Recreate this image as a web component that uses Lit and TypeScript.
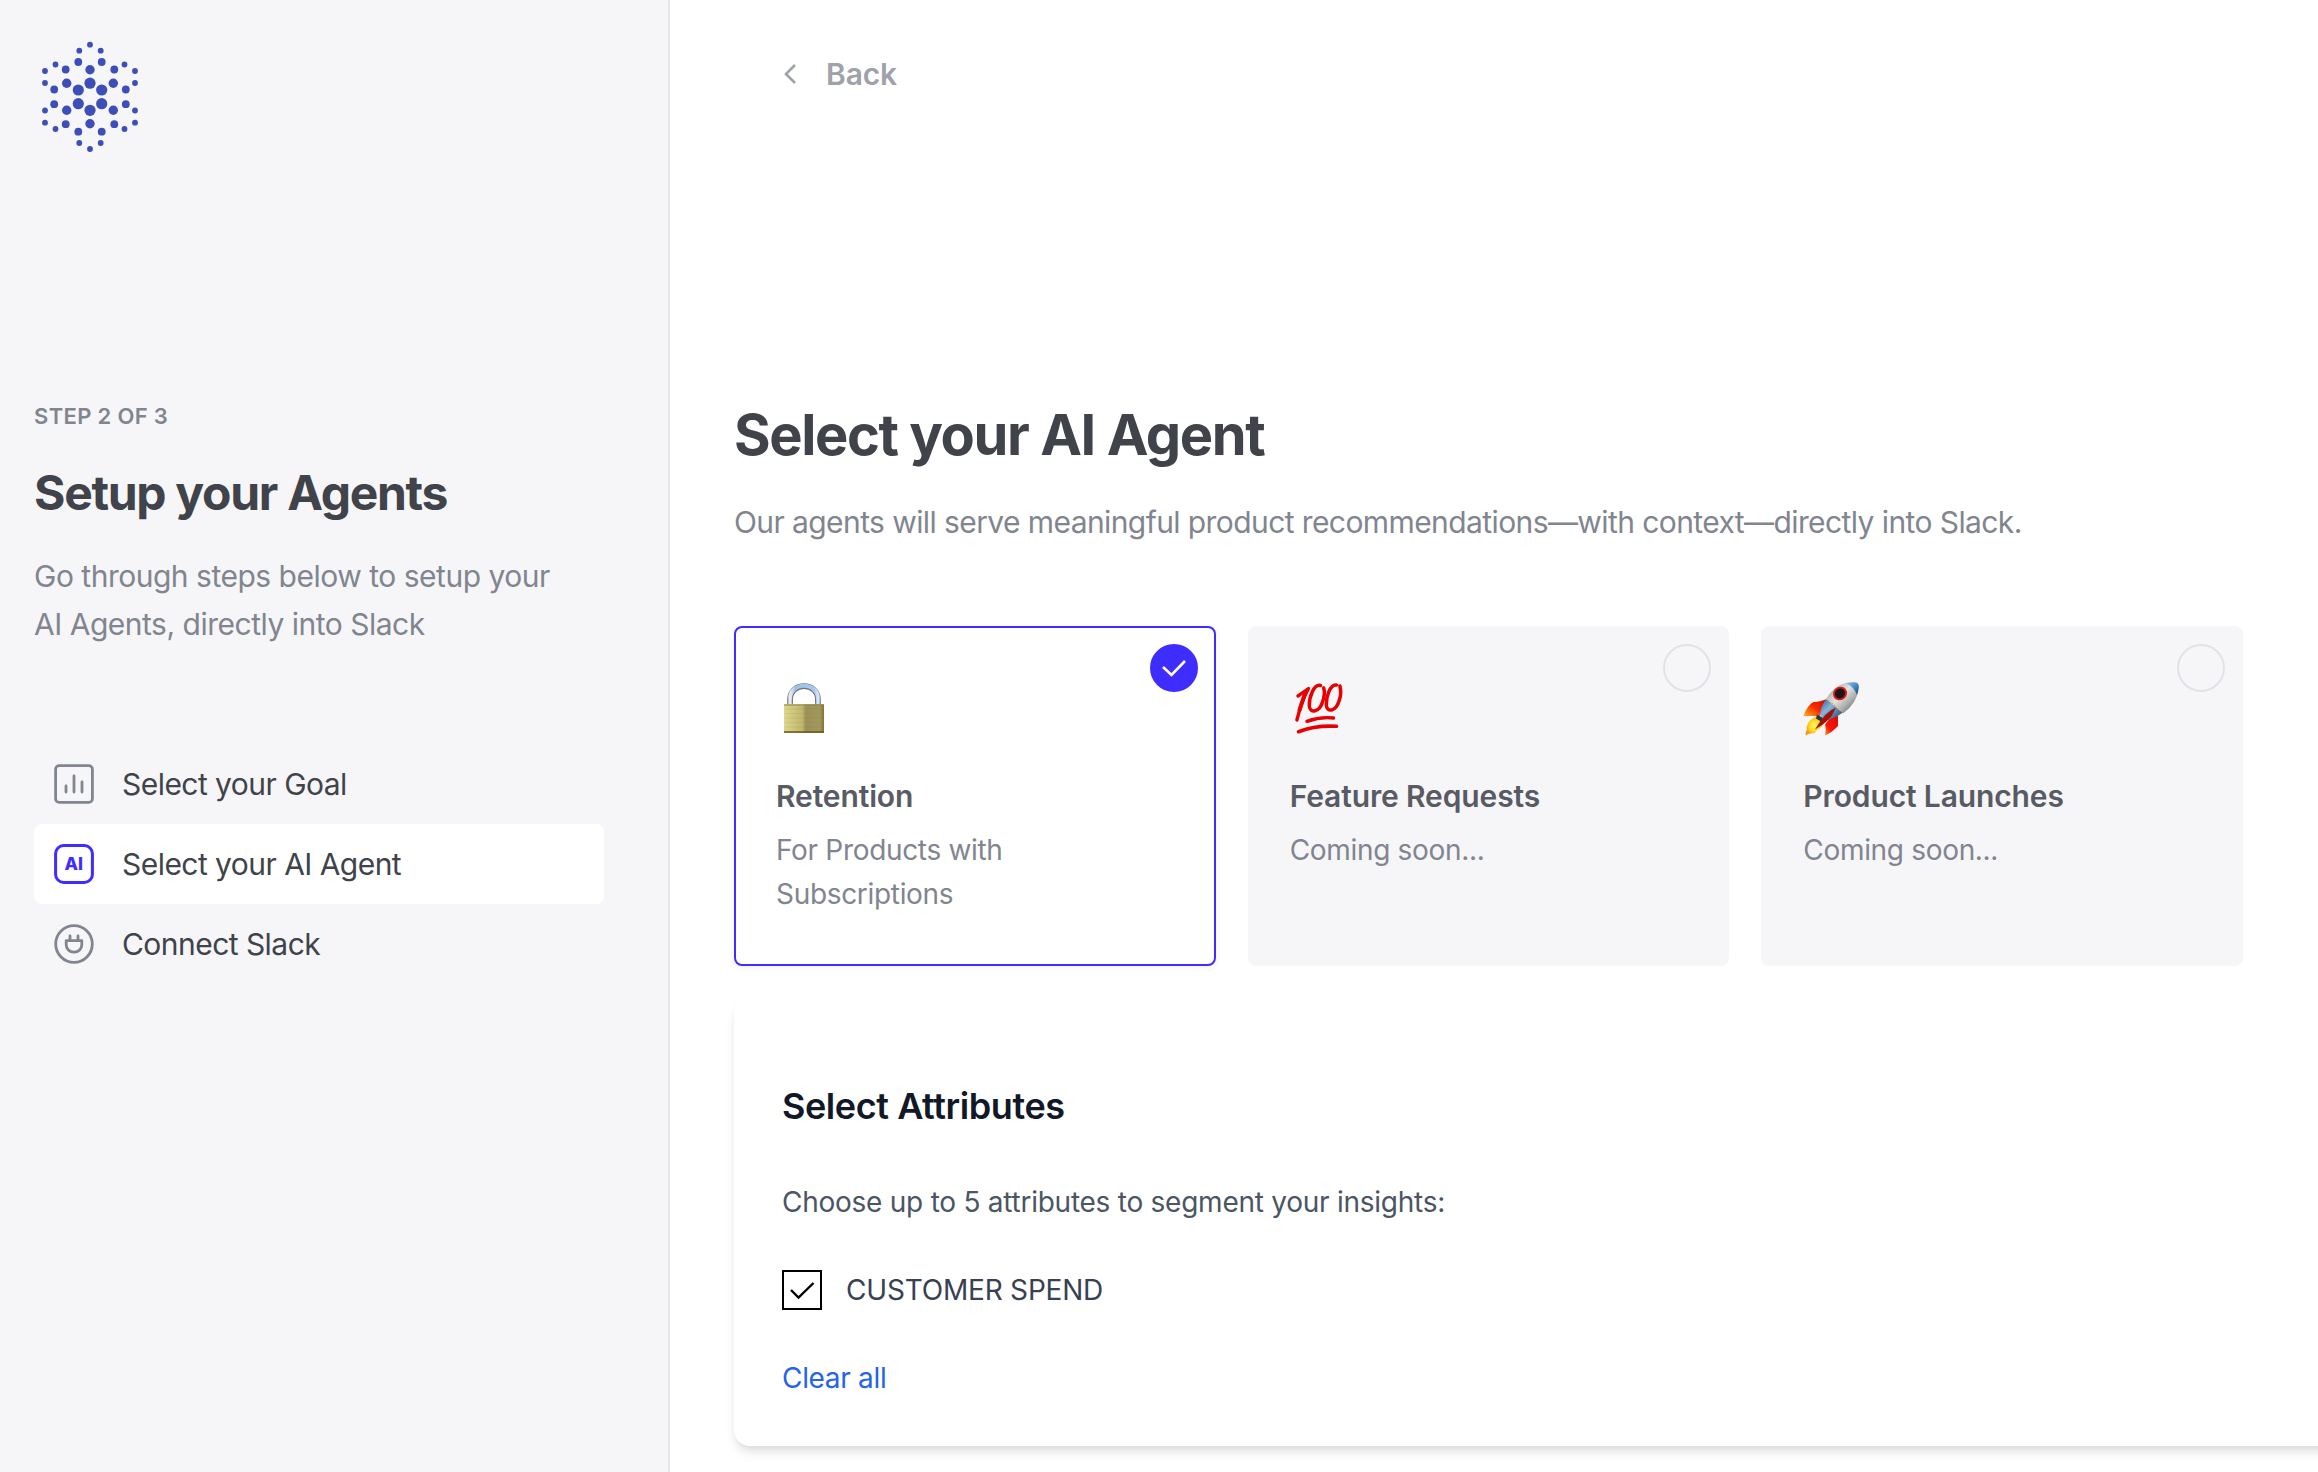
import { LitElement, html, css, svg } from "lit";
import { customElement } from "lit/decorators.js";

const LOGO_DOTS: [number, number, number][] = [
  [70,24.7,2.9],[59.3,30.7,2.9],[80.7,30.7,2.9],[58.3,42,3.9],[81.7,42,3.9],
  [35.5,44.5,2.9],[104.5,44.5,2.9],[25,51,2.9],[115,51,2.9],[45.7,49.5,3.9],[94.3,49.5,3.9],[70,49.7,4.7],
  [25,63,2.9],[115,63,2.9],[46.7,63.3,4.7],[93.3,63.3,4.7],[70,63.2,5.6],
  [34.2,69.5,3.9],[105.8,69.5,3.9],[58.3,70,5.6],[81.7,70,5.6],
  [34.2,84.2,3.9],[105.8,84.2,3.9],[58.3,83.7,5.6],[81.7,83.7,5.6],
  [25,90.5,2.9],[115,90.5,2.9],[46.7,90.3,4.7],[93.3,90.3,4.7],[70,90.3,5.6],
  [25,102.7,2.9],[115,102.7,2.9],[45.7,104.2,3.9],[94.3,104.2,3.9],[70,103.8,4.7],
  [35.5,109,2.9],[104.5,109,2.9],[58.3,111.7,3.9],[81.7,111.7,3.9],
  [59.3,123,2.9],[80.7,123,2.9],[70,129,2.9],
];

const logo = html`<svg class="logo" viewBox="0 0 140 150">
  ${LOGO_DOTS.map(([x, y, r]) => svg`<circle cx=${x} cy=${y} r=${r} fill="#3d4eb8"></circle>`)}
</svg>`;

const goalIcon = html`<svg class="nav-icon" viewBox="0 0 40 40" fill="none" stroke="#81858f" stroke-width="2.8" stroke-linecap="round">
  <rect x="1.6" y="1.6" width="36.8" height="36.800" rx="3.600"></rect>
  <path d="M12 22V28M20 11.800V28M28 18V28"></path>
</svg>`;

const aiIcon = html`<svg class="nav-icon" viewBox="0 0 40 40" fill="none" stroke="#3f2dff" stroke-width="3">
  <rect x="1.600" y="1.600" width="36.800" height="36.800" rx="8"></rect>
  <text class="ai" x="19.700" y="26.200" text-anchor="middle">AI</text>
</svg>`;

const plugIcon = html`<svg class="nav-icon" viewBox="0 0 40 40" fill="none" stroke="#81858f" stroke-width="2.800" stroke-linecap="round" stroke-linejoin="round">
  <circle cx="20" cy="20" r="18.300"></circle>
  <path d="M16 11.800V16.500M24 11.800V16.500M12.200 16.700H27.800V20.700A7.500 7.500 0 0 1 20.300 28.200H19.700A7.500 7.500 0 0 1 12.200 20.700Z"></path>
</svg>`;

const lockArt = html`<svg class="art" viewBox="-2 -1 60 60">
  <defs>
    <linearGradient id="brass"><stop offset="0" stop-color="#ddd78b"></stop><stop offset=".46" stop-color="#bfb76d"></stop><stop offset=".54" stop-color="#9b9258"></stop><stop offset=".9" stop-color="#a1985c"></stop><stop offset="1" stop-color="#857230"></stop></linearGradient>
    <linearGradient id="steel" gradientUnits="userSpaceOnUse" x1="9" y1="0" x2="43" y2="0"><stop offset="0" stop-color="#8b9099"></stop><stop offset=".08" stop-color="#eef2f6"></stop><stop offset=".25" stop-color="#9fc1e6"></stop><stop offset=".8" stop-color="#a3c9f4"></stop><stop offset=".92" stop-color="#dbe9f8"></stop><stop offset="1" stop-color="#8d9db4"></stop></linearGradient>
  </defs>
  <path d="M12 32V27C12 8.500 40 8.500 40 27V32" fill="none" stroke="#77736f" stroke-width="5.800"></path>
  <path d="M11.700 32V27C11.700 8 40.300 8 40.300 27V32" fill="none" stroke="url(#steel)" stroke-width="4.200"></path>
  <rect x="6" y="31.300" width="40" height="28.700" rx=".8" fill="url(#brass)"></rect>
  <path d="M6 32H46" stroke="#8e8248" stroke-width="1"></path>
  <path d="M7 36H45M7 40.500H45M7 45H45M7 49.500H45M7 54H45" stroke="#85783b" stroke-opacity=".18" stroke-width=".8"></path>
  <path d="M6 59H46" stroke="#6e5320" stroke-width="1.600"></path>
</svg>`;

const hundredArt = html`<svg class="art" viewBox="0 -1 60 60" fill="none" stroke="#e80000" stroke-linecap="round" stroke-linejoin="round">
  <path d="M8 23Q13 19.500 18.500 15.500Q11.500 28 6.900 47" stroke-width="3.400"></path>
  <path d="M14.500 22L9.500 37" stroke-width="4"></path>
  <path d="M30.500 12.500C24 11 19 24 19.300 33C19.800 40.500 29.500 39.500 32.500 29C34.700 23 34.700 18 33.700 15" stroke-width="3.500"></path>
  <path d="M46.500 12C40 11 36 24 36.300 32C36.700 40 46 38.500 49 28C51.300 22 50.900 17 49.900 13" stroke-width="3.500"></path>
  <path d="M17 48.300Q30 43.500 43.500 45" stroke-width="3.400"></path>
  <path d="M8.500 58.700Q26 52 46.500 53.300" stroke-width="3.600"></path>
</svg>`;

const rocketArt = html`<svg class="art" viewBox="5 -1.500 60 60">
  <defs>
    <linearGradient id="fin" x1="1" y1="0" x2="0" y2="1"><stop offset="0" stop-color="#c80b00"></stop><stop offset=".5" stop-color="#f52a00"></stop><stop offset="1" stop-color="#ffb51d"></stop></linearGradient>
    <linearGradient id="fin2" x1="1" y1="0" x2="0" y2="1"><stop offset="0" stop-color="#d50d05"></stop><stop offset=".65" stop-color="#fa1508"></stop><stop offset="1" stop-color="#ff9c1a"></stop></linearGradient>
    <linearGradient id="hull" x1="0" y1="0" x2="1" y2="1"><stop offset="0" stop-color="#85898a"></stop><stop offset=".45" stop-color="#e2e4e1"></stop><stop offset=".7" stop-color="#a3a6a4"></stop><stop offset="1" stop-color="#393c3c"></stop></linearGradient>
    <linearGradient id="tail" x1="0" y1="0" x2="1" y2="1"><stop offset="0" stop-color="#2c5e91"></stop><stop offset=".4" stop-color="#87b3dd"></stop><stop offset="1" stop-color="#17395e"></stop></linearGradient>
    <linearGradient id="nose" x1="0" y1="0" x2="1" y2="1"><stop offset="0" stop-color="#9dc8ed"></stop><stop offset=".6" stop-color="#3c7fc0"></stop><stop offset="1" stop-color="#153f70"></stop></linearGradient>
    <radialGradient id="fire"><stop offset="0" stop-color="#fff46b"></stop><stop offset=".6" stop-color="#ffd91e"></stop><stop offset="1" stop-color="#f59a0c"></stop></radialGradient>
  </defs>
  <path d="M5.300 42.500Q10 31 15.500 28.500Q20 29 29 25.500L22 42.500Z" fill="url(#fin)"></path>
  <path d="M40 42V52.500Q34 59 27 62Q28.500 56 27 51L34 42Z" fill="url(#fin2)"></path>
  <path d="M20 42.500Q11 46 10 50Q8 53 9 56Q7 59 7.800 62Q12 59 16 60Q19 56 22 55Q26 51 26 46Z" fill="url(#fire)"></path>
  <path d="M19 41L26 45L23 48L18 45Z" fill="#273747"></path>
  <path d="M28 25.500Q23 33 22 41L26 47Q35 46 45 39Z" fill="url(#tail)"></path>
  <path d="M28 25.500Q37 10 53 8.500Q62 7 60.500 15Q59 30 45 40Q40 32 28 25.500Z" fill="url(#hull)"></path>
  <path d="M48 10Q62 6 60.700 14Q60.500 18 59 21.500Q56 13 48 10Z" fill="url(#nose)"></path>
  <path d="M28 25.500Q37 31 43.500 38.500" fill="none" stroke="#d2a64a" stroke-width="1.200" stroke-dasharray="1.500 1"></path>
  <path d="M38 34Q27 38 17 56Q29 49 34 42Z" fill="#a11307"></path>
  <ellipse cx="42" cy="20" rx="7.200" ry="6.600" transform="rotate(-35 42 20)" fill="#e01616"></ellipse>
  <ellipse cx="42" cy="20" rx="5.300" ry="4.800" transform="rotate(-35 42 20)" fill="#1b1519"></ellipse>
</svg>`;

const STEPS = [
  { label: "Select your Goal", icon: goalIcon, active: false },
  { label: "Select your AI Agent", icon: aiIcon, active: true },
  { label: "Connect Slack", icon: plugIcon, active: false },
];

const AGENTS = [
  { title: "Retention", text: "For Products with Subscriptions", art: lockArt, selected: true },
  { title: "Feature Requests", text: "Coming soon...", art: hundredArt, selected: false },
  { title: "Product Launches", text: "Coming soon...", art: rocketArt, selected: false },
];

@customElement("app-root")
export class AppRoot extends LitElement {
  static styles = css`
    :host { display: flex; width: 100%; height: 100vh; overflow: hidden; background: #fff; font-family: Inter, "Liberation Sans", sans-serif; color: #40434a; -webkit-font-smoothing: antialiased; }
    * { box-sizing: border-box; }
    h1, h2, h3, p { margin: 0; }
    svg { display: block; overflow: visible; }
    .side { flex: none; width: 670px; background: #f6f6f8; border-right: 2px solid #e7e7eb; padding: 20px 64px 0 34px; }
    .logo { width: 140px; height: 150px; margin-left: -14px; }
    .step { margin-top: 230px; font-size: 22px; line-height: 32px; font-weight: 600; letter-spacing: .33px; color: #81858f; }
    .side-title { margin-top: 31px; font-size: 48px; line-height: 60px; font-weight: 700; letter-spacing: -1.29px; }
    .side-text { margin-top: 29px; font-size: 30px; line-height: 48px; letter-spacing: -.49px; color: #81858f; width: 560px; }
    .nav { margin-top: 96px; }
    .nav-item { display: flex; align-items: center; height: 80px; padding-left: 20px; gap: 28px; border-radius: 8px; font-size: 30px; letter-spacing: -.54px; white-space: nowrap; }
    .nav-item.active { background: #fff; }
    .nav-icon { width: 40px; height: 40px; flex: none; }
    .ai { font: 800 17.5px Inter, sans-serif; letter-spacing: 0; fill: #3f2dff; stroke: none; }
    .main { flex: 1; min-width: 0; padding: 50px 75px 0 64px; }
    .back { display: flex; align-items: center; height: 48px; padding-left: 50px; gap: 30px; font-size: 30px; font-weight: 600; letter-spacing: -.15px; color: #9fa2aa; }
    .chev { width: 12px; height: 20px; }
    .title { margin-top: 301px; font-size: 56px; line-height: 72px; font-weight: 700; letter-spacing: -1.42px; }
    .lead { margin-top: 27px; font-size: 30px; line-height: 48px; letter-spacing: -.59px; color: #81858f; white-space: nowrap; }
    .agents { display: grid; grid-template-columns: repeat(3, 1fr); gap: 32px; margin-top: 80px; }
    .agent { position: relative; height: 340px; border-radius: 8px; border: 2px solid #f6f6f8; background: #f6f6f8; padding: 44px 40px 0; }
    .agent.selected { background: #fff; border-color: #3f2dff; box-shadow: 0 2px 6px rgba(20, 20, 50, .06); }
    .art { width: 60px; height: 60px; }
    .agent-title { margin-top: 44px; font-size: 30px; line-height: 40px; font-weight: 600; letter-spacing: -.13px; color: #585b63; }
    .agent-text { margin-top: 12px; font-size: 28px; line-height: 44px; letter-spacing: -.32px; color: #81858f; width: 300px; }
    .mark { position: absolute; top: 16px; right: 16px; width: 48px; height: 48px; border-radius: 50%; border: 2px solid #e1e1e8; display: flex; align-items: center; justify-content: center; }
    .selected .mark { background: #3f2dff; border-color: #3f2dff; }
    .tick { width: 24px; height: 18px; }
    .attrs { margin-top: 32px; width: 1700px; height: 448px; border-radius: 16px; background: #fff; padding: 80px 48px 0; box-shadow: 0 8px 12px -2px rgba(0, 0, 0, .1), 0 4px 8px -4px rgba(0, 0, 0, .1); }
    .attrs-title { font-size: 36px; line-height: 56px; font-weight: 600; letter-spacing: -.42px; color: #111827; }
    .attrs-text { margin-top: 44px; font-size: 28px; line-height: 48px; letter-spacing: -.25px; color: #4b5563; }
    .check { display: flex; align-items: center; margin-top: 40px; height: 48px; gap: 24px; font-size: 28px; letter-spacing: -.2px; color: #374151; }
    .box { width: 40px; height: 40px; border: 2px solid #000; display: flex; align-items: center; justify-content: center; }
    .clear { margin-top: 40px; font-size: 28px; line-height: 48px; letter-spacing: -.32px; color: #2563eb; }
  `;

  render() {
    return html`
      <aside class="side">
        ${logo}
        <p class="step">STEP 2 OF 3</p>
        <h2 class="side-title">Setup your Agents</h2>
        <p class="side-text">Go through steps below to setup your<br />AI Agents, directly into Slack</p>
        <nav class="nav">
          ${STEPS.map((s) => html`<div class="nav-item ${s.active ? "active" : ""}">${s.icon}<span>${s.label}</span></div>`)}
        </nav>
      </aside>
      <main class="main">
        <div class="back">
          <svg class="chev" viewBox="0 0 12 20" fill="none" stroke="#9fa2aa" stroke-width="2.600"><path d="M11 1L2 10L11 19"></path></svg>
          <span>Back</span>
        </div>
        <h1 class="title">Select your AI Agent</h1>
        <p class="lead">Our agents will serve meaningful product recommendations—with context—directly into Slack.</p>
        <section class="agents">
          ${AGENTS.map((a) => html`
            <article class="agent ${a.selected ? "selected" : ""}">
              <div class="mark">${a.selected
                ? html`<svg class="tick" viewBox="0 0 24 18" fill="none" stroke="#fff" stroke-width="2.600"><path d="M1 8L9.500 16L23 2"></path></svg>`
                : ""}</div>
              ${a.art}
              <h3 class="agent-title">${a.title}</h3>
              <p class="agent-text">${a.text}</p>
            </article>`)}
        </section>
        <section class="attrs">
          <h2 class="attrs-title">Select Attributes</h2>
          <p class="attrs-text">Choose up to 5 attributes to segment your insights:</p>
          <div class="check">
            <span class="box"><svg class="tick" viewBox="0 0 24 18" fill="none" stroke="#000" stroke-width="2.400"><path d="M1 9L8.500 16.500L23.500 2"></path></svg></span>
            <span>CUSTOMER SPEND</span>
          </div>
          <div class="clear">Clear all</div>
        </section>
      </main>
    `;
  }
}
